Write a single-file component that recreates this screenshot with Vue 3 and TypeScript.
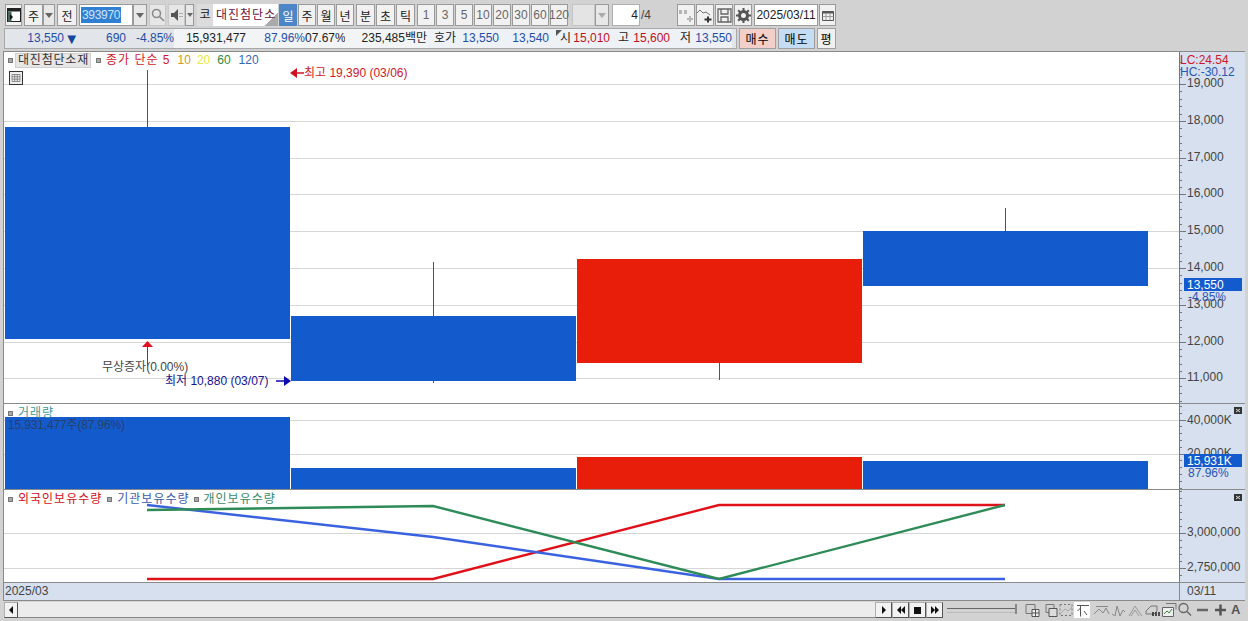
<template>
  <div class="page">
    <!-- 상단 툴바 -->
    <div class="bar bar--top">
      <button class="btn w17 icon">
        <svg width="14" height="14" viewBox="0 0 14 14"><rect x="0.5" y="0.5" width="13" height="13" fill="#fff" stroke="#222"/><rect x="1" y="1" width="12" height="2.5" fill="#222"/><rect x="1" y="3.5" width="3.5" height="10" fill="#4a6a5a"/><path d="M3 6l3 3-3 3z" fill="#111"/></svg>
      </button>
      <div class="combo">
        <button class="btn w19">주</button>
        <button class="btn arrow w12"><i class="caret"></i></button>
      </div>
      <button class="btn w20">전</button>
      <div class="combo">
        <div class="code"><span class="code__sel">393970</span></div>
        <button class="btn arrow w14"><i class="caret"></i></button>
      </div>
      <button class="btn w17 flat icon">
        <svg width="14" height="14" viewBox="0 0 14 14" fill="none" stroke="#8a8a8a" stroke-width="1.6"><circle cx="5.5" cy="5.5" r="4"/><path d="M8.5 8.5l4.5 4.5"/></svg>
      </button>
      <div class="combo">
        <button class="btn w17 flat icon">
          <svg width="14" height="14" viewBox="0 0 14 14"><path d="M1 5h3l4-4v12l-4-4H1z" fill="#555"/><path d="M10 5v1M10 8v1M12 5v1M12 8v1" stroke="#777"/></svg>
        </button>
        <button class="btn arrow w9"><i class="caret caret--sm"></i></button>
      </div>
      <div class="name ml3">
        <span class="name__tag">코</span>
        <span class="name__text">대진첨단소</span>
      </div>
      <div class="group ml1">
        <button v-for="p in periods" :key="p" class="btn w18" :class="{ 'btn--on': p === '일' }">{{ p }}</button>
      </div>
      <div class="group">
        <button v-for="p in units" :key="p" class="btn w19">{{ p }}</button>
      </div>
      <div class="group">
        <button v-for="n in minutes" :key="n" class="btn w18 btn--mute">{{ n }}</button>
      </div>
      <div class="combo ml2">
        <div class="blank"></div>
        <button class="btn arrow w14 btn--mute"><i class="caret caret--light"></i></button>
      </div>
      <div class="count ml3">4</div>
      <span class="count__total">/4</span>
      <div class="group tools">
        <button class="btn w18 icon">
          <svg width="16" height="16" viewBox="0 0 16 16" fill="#b5b5b5"><rect x="1" y="3" width="3" height="4"/><rect x="6" y="3" width="3" height="4"/><path d="M11 9h2v2h2v2h-2v2h-2v-2H9v-2h2z"/></svg>
        </button>
        <button class="btn w18 icon">
          <svg width="16" height="16" viewBox="0 0 16 16" fill="none"><path d="M0 6l3-3 3 3 3-1 4 3" stroke="#777"/><path d="M10 9.5h2v2h2.500v2H12v2h-2v-2H7.500v-2H10z" fill="#333"/></svg>
        </button>
        <button class="btn w18 icon">
          <svg width="15" height="15" viewBox="0 0 15 15" fill="none" stroke="#666" stroke-width="1.3"><path d="M1 1h13v13H1z"/><path d="M4 1v5h7V1M4 14V9h7v5"/></svg>
        </button>
        <button class="btn w18 icon">
          <svg width="15" height="15" viewBox="0 0 15 15"><circle cx="7.500" cy="7.500" r="4" fill="none" stroke="#555" stroke-width="3"/><path d="M7.500 0v3M7.500 12v3M0 7.500h3M12 7.500h3M2.200 2.200l2 2M10.800 10.800l2 2M12.800 2.200l-2 2M4.200 10.800l-2 2" stroke="#555" stroke-width="2"/></svg>
        </button>
      </div>
      <div class="date">2025/03/11</div>
      <button class="btn w17 icon ml1">
        <svg width="14" height="13" viewBox="0 0 14 13" fill="none" stroke="#555"><path d="M1.500 2.500h11v9h-11z"/><path d="M1.500 3.500h11" stroke-width="2"/><path d="M1.500 7.500h11M5 4v7M9 4v7" stroke="#999"/></svg>
      </button>
    </div>

    <!-- 시세 -->
    <div class="bar bar--quote">
      <div class="quote">
        <span v-for="c in quoteCells" :key="c.x" class="cell" :class="c.cls" :style="{ width: c.w + 'px' }">{{ c.t }}</span>
        <svg class="notch" width="6" height="6" viewBox="0 0 6 6"><path d="M0 0h6L0 6z" fill="#555"/></svg>
      </div>
      <button class="trade trade--buy">매수</button>
      <button class="trade trade--sell">매도</button>
      <button class="trade trade--eval">평</button>
    </div>

    <!-- 차트 -->
    <div class="chart">
      <div class="pane pane--price">
        <svg class="plot" width="1175" height="351" viewBox="4 52 1175 351">
          <line v-for="y in priceGrid" :key="y" x1="4" x2="1179" :y1="y + 0.5" :y2="y + 0.5" class="grid" />
          <g v-for="c in candles" :key="c.x">
            <rect :x="c.wx" :y="c.wt" width="1" :height="c.wb - c.wt" :fill="c.wick" />
            <rect :x="c.x" :y="c.top" width="285" :height="c.bottom - c.top" :fill="c.color" />
          </g>
          <path d="M147.500 366V344" stroke="#f00018" />
          <path d="M142 347l5.500-6 5.500 6z" fill="#e01020" />
          <text x="102" y="371" class="t t--dark">무상증자(0.00%)</text>
          <text x="165" y="385" class="t t--navy">최저 10,880 (03/07)</text>
          <path d="M276 381h8" stroke="#0a0ab0" stroke-width="1.500" />
          <path d="M284 376l7 5-7 5z" fill="#0a0ab0" />
          <path d="M297 73h7" stroke="#d01020" stroke-width="1.500" />
          <path d="M297 68l-7 5 7 5z" fill="#d01020" />
          <text x="304" y="77" class="t t--red">최고 19,390 (03/06)</text>
        </svg>
        <svg class="axis" width="66" height="351" viewBox="1179 52 66 351">
          <line x1="1179.500" x2="1179.500" y1="52" y2="403" class="tick" />
          <line v-for="y in priceMinor" :key="y" x1="1179" x2="1182" :y1="y + 0.5" :y2="y + 0.5" class="tick" />
          <g v-for="l in priceLabels" :key="l.t">
            <line x1="1179" x2="1186" :y1="l.y + 0.5" :y2="l.y + 0.5" class="tick" />
            <text x="1187" :y="l.y + 3" class="t t--axis">{{ l.t }}</text>
          </g>
          <text x="1180" y="64" class="t t--red">LC:24.54</text>
          <text x="1180" y="76" class="t t--blue">HC:-30.12</text>
          <rect x="1184" y="278" width="58" height="13" fill="#135bcd" />
          <text x="1187" y="289" class="t t--white">13,550</text>
          <text x="1188" y="301" class="t t--blue">-4.85%</text>
        </svg>
        <div class="legend">
          <i class="dot"></i>
          <span class="legend__name">대진첨단소재</span>
          <i class="dot"></i>
          <span class="c-red hangul">종가 단순 5</span>
          <span class="c-orange ml7">10</span>
          <span class="c-yellow ml6">20</span>
          <span class="c-green ml7">60</span>
          <span class="c-blue ml8">120</span>
        </div>
        <div class="table-btn">
          <svg width="14" height="14" viewBox="0 0 14 14" fill="#fff" stroke="#333"><rect x="0.500" y="0.500" width="13" height="13" fill="#eee"/><path d="M3 3.500h8v7H3zM3 5.800h8M3 8.200h8M5.700 3.500v7M8.300 3.500v7" stroke="#777" stroke-width="0.800" fill="none"/></svg>
        </div>
      </div>

      <div class="pane pane--vol">
        <svg class="plot" width="1175" height="85" viewBox="4 404 1175 85">
          <line x1="4" x2="1179" y1="420.500" y2="420.500" class="grid" />
          <line x1="4" x2="1179" y1="454.500" y2="454.500" class="grid" />
          <rect v-for="b in volumes" :key="b.x" :x="b.x" :y="b.y" width="285" :height="489 - b.y" :fill="b.color" />
          <text x="8" y="429" class="t t--over">15,931,477주(87.96%)</text>
        </svg>
        <svg class="axis" width="66" height="85" viewBox="1179 404 66 85">
          <line x1="1179.500" x2="1179.500" y1="404" y2="489" class="tick" />
          <line v-for="y in volMinor" :key="y" x1="1179" x2="1182" :y1="y + 0.5" :y2="y + 0.5" class="tick" />
          <line x1="1179" x2="1186" y1="420.500" y2="420.500" class="tick" />
          <line x1="1179" x2="1186" y1="454.500" y2="454.500" class="tick" />
          <text x="1187" y="424" class="t t--axis">40,000K</text>
          <text x="1187" y="457" class="t t--axis">20,000K</text>
          <rect x="1184" y="454" width="58" height="13" fill="#135bcd" />
          <text x="1187" y="465" class="t t--white">15,931K</text>
          <text x="1188" y="477" class="t t--blue">87.96%</text>
          <rect x="1234" y="407" width="8" height="7" fill="#333" />
          <path d="M1236 409l4 3M1240 409l-4 3" stroke="#ddd" />
        </svg>
        <div class="legend legend--sub">
          <i class="dot"></i>
          <span class="c-teal hangul">거래량</span>
        </div>
      </div>

      <div class="pane pane--hold">
        <svg class="plot" width="1175" height="92" viewBox="4 490 1175 92">
          <line x1="4" x2="1179" y1="533.500" y2="533.500" class="grid" />
          <line x1="4" x2="1179" y1="568.500" y2="568.500" class="grid" />
          <polyline v-for="l in holdLines" :key="l.color" :points="l.points" fill="none" :stroke="l.color" stroke-width="2.400" />
        </svg>
        <svg class="axis" width="66" height="92" viewBox="1179 490 66 92">
          <line x1="1179.500" x2="1179.500" y1="490" y2="582" class="tick" />
          <line v-for="y in holdMinor" :key="y" x1="1179" x2="1182" :y1="y + 0.5" :y2="y + 0.5" class="tick" />
          <line x1="1179" x2="1186" y1="533.500" y2="533.500" class="tick" />
          <line x1="1179" x2="1186" y1="568.500" y2="568.500" class="tick" />
          <text x="1187" y="536" class="t t--axis">3,000,000</text>
          <text x="1187" y="571" class="t t--axis">2,750,000</text>
          <rect x="1234" y="494" width="8" height="7" fill="#333" />
          <path d="M1236 496l4 3M1240 496l-4 3" stroke="#ddd" />
        </svg>
        <div class="legend legend--sub">
          <i class="dot"></i>
          <span class="c-red2 hangul">외국인보유수량</span>
          <i class="dot ml5"></i>
          <span class="c-blue2 hangul">기관보유수량</span>
          <i class="dot ml4"></i>
          <span class="c-green2 hangul">개인보유수량</span>
        </div>
      </div>

      <div class="dates">
        <span class="dates__from">2025/03</span>
        <span class="dates__to">03/11</span>
      </div>
    </div>

    <!-- 하단 스크롤/도구 -->
    <div class="foot">
      <button class="fbtn w14"><i class="tri tri--l"></i></button>
      <div class="track"></div>
      <button class="fbtn w17"><i class="tri tri--r"></i></button>
      <button class="fbtn w17"><i class="tri tri--l"></i><i class="tri tri--l"></i></button>
      <button class="fbtn w17"><i class="square"></i></button>
      <button class="fbtn w17"><i class="tri tri--r"></i><i class="tri tri--r"></i></button>
      <div class="slider"><i class="slider__knob"></i></div>
      <div class="tools2">
        <svg width="219" height="16" viewBox="0 0 219 16" fill="none" stroke="#777">
          <path d="M1 2.500h9v9H1z" /><path d="M7 7.500h7v7H7z" fill="#eee" stroke="#555" /><path d="M10.500 7.500v7M7 11h7" stroke="#555" />
          <path d="M21 2.500h8v8h-8z" /><path d="M24 6.500h8v8h-8z" fill="#ddd" stroke="#555" />
          <path d="M35 2.500h12v11H35z" stroke-dasharray="2 2" /><path d="M36 11l4-4 3 2 4-4" stroke="#aaa" />
          <rect x="49" y="0" width="16" height="16" fill="#fff" stroke="none" /><path d="M52 3.500h12M55.500 3.500v11M59 9l3 4M55.500 6l-3 3" stroke="#555" />
          <path d="M69 12l5-5 4 4 3-5 3 6M71 4.500h12" stroke="#888" />
          <path d="M87 12l3 2 2-10 3 10 3-6 2 2" stroke="#888" />
          <path d="M104 14l6-10 4 6 3 4M106 14l4-6 4 6" stroke="#999" />
          <path d="M121 9l5-5h6v5l-3 3h-8z" stroke="#777" /><path d="M128 14v-4M131 14v-4M134 14v-4" stroke="#222" stroke-width="1.500" />
          <path d="M141 1.500h10v6" stroke="#777" /><path d="M137.500 5.500h11v9h-11z" fill="#eee" stroke="#666" /><path d="M139 12l3-3 2 2 3-4" stroke="#3a8a3a" />
          <circle cx="158.500" cy="6" r="4.500" stroke="#666" stroke-width="1.300" /><path d="M162 9.500l4 4" stroke="#666" stroke-width="1.500" />
          <path d="M172 8h11" stroke="#666" stroke-width="2.500" />
          <path d="M190 8h11M195.500 2.500v11" stroke="#555" stroke-width="2.500" />
        </svg>
        <span class="tools2__a">A</span>
      </div>
    </div>
  </div>
</template>

<script setup lang="ts">
const periods = ['일', '주', '월', '년']
const units = ['분', '초', '틱']
const minutes = [1, 3, 5, 10, 20, 30, 60, 120]

interface QuoteCell {
  x: number
  w: number
  t: string
  cls: string
}

// 시세줄 셀: 오른쪽 정렬 + 고정폭
const quoteCells: QuoteCell[] = [
  { x: 1, w: 59, t: '13,550', cls: 'c-blue3' },
  { x: 2, w: 15, t: '▼', cls: 'c-blue3 down' },
  { x: 3, w: 47, t: '690', cls: 'c-blue3' },
  { x: 4, w: 48, t: '-4.85%', cls: 'c-blue3' },
  { x: 5, w: 72, t: '15,931,477', cls: 'lite' },
  { x: 6, w: 59, t: '87.96%', cls: 'lite c-blue3' },
  { x: 7, w: 40, t: '07.67%', cls: 'lite' },
  { x: 8, w: 82, t: '235,485백만', cls: 'lite2' },
  { x: 9, w: 29, t: '호가', cls: 'pale' },
  { x: 10, w: 43, t: '13,550', cls: 'pale c-blue3' },
  { x: 11, w: 50, t: '13,540', cls: 'pale c-blue3' },
  { x: 12, w: 22, t: '시', cls: 'pale' },
  { x: 13, w: 39, t: '15,010', cls: 'pale c-red3' },
  { x: 14, w: 19, t: '고', cls: 'pale' },
  { x: 15, w: 41, t: '15,600', cls: 'pale c-red3' },
  { x: 16, w: 21, t: '저', cls: 'pale' },
  { x: 17, w: 41, t: '13,550', cls: 'pale c-blue3' }
]

const BLUE = '#135bcd'
const RED = '#e81d0a'

const priceY = (p: number) => Math.round(84 + ((19000 - p) / 1000) * 36.8)
const priceLabels = [19000, 18000, 17000, 16000, 15000, 14000, 13000, 12000, 11000].map((p) => ({
  t: p.toLocaleString('en-US'),
  y: priceY(p)
}))
const priceGrid = priceLabels.map((l) => l.y)

const range = (from: number, to: number, step: number) => {
  const out: number[] = []
  for (let v = from; v < to; v += step) out.push(Math.round(v))
  return out
}
const priceMinor = range(62, 403, 7.36)
const volMinor = range(406, 489, 6.8)
const holdMinor = range(491, 582, 7)

const candles = [
  { x: 5, top: 127, bottom: 339, wx: 147, wt: 70, wb: 127, color: BLUE, wick: '#1060c0' },
  { x: 291, top: 316, bottom: 381, wx: 433, wt: 262, wb: 383, color: BLUE, wick: '#1060c0' },
  { x: 577, top: 259, bottom: 363, wx: 719, wt: 259, wb: 380, color: RED, wick: '#ff1000' },
  { x: 863, top: 231, bottom: 286, wx: 1005, wt: 208, wb: 231, color: BLUE, wick: '#1060c0' }
]

const volumes = [
  { x: 5, y: 417, color: BLUE },
  { x: 291, y: 468, color: BLUE },
  { x: 577, y: 457, color: RED },
  { x: 863, y: 461, color: BLUE }
]

const holdLines = [
  { color: '#e0101a', points: '147,579 433,579 719,505 1005,505' },
  { color: '#3a62e0', points: '147,505 433,537 719,579 1005,579' },
  { color: '#2e8b57', points: '147,510 433,506 719,579 1005,505' }
]
</script>

<style>
html,
body {
  margin: 0;
  background: #d2d2d2;
}
</style>

<style scoped>
.page {
  width: 1248px;
  height: 621px;
  overflow: hidden;
  background: #d2d2d2;
  font-family: "Liberation Sans", "Noto Sans CJK KR", sans-serif;
  font-size: 12px;
  color: #222;
  box-sizing: border-box;
  padding-top: 4px;
}

button {
  font: inherit;
  padding: 0;
}

.bar {
  display: flex;
  align-items: stretch;
  margin-left: 5px;
}

.bar--top {
  height: 22px;
  gap: 2px;
}

.btn {
  height: 22px;
  box-sizing: border-box;
  border: 1px solid #9a9a9a;
  background: #f1f1f1;
  color: #222;
  display: flex;
  align-items: center;
  justify-content: center;
  flex-shrink: 0;
}

.btn--on {
  background: #4d86c6;
  border-color: #4d86c6;
  color: #fff;
}

.btn--mute {
  color: #666;
}

.flat {
  border-color: #c8c8c8;
  background: #e6e6e6;
}

.arrow {
  background: #e8e8e8;
}

.icon svg {
  display: block;
}

.w9 { width: 9px; }
.w12 { width: 12px; }
.w14 { width: 14px; }
.w17 { width: 17px; }
.w18 { width: 18px; }
.w19 { width: 19px; }
.w20 { width: 20px; }

.ml1 { margin-left: -1px; }
.ml2 { margin-left: 2px; }
.ml3 { margin-left: 1px; }
.ml4 { margin-left: 4px; }
.ml5 { margin-left: 5px; }
.ml6 { margin-left: 6px; }
.ml7 { margin-left: 7px; }
.ml8 { margin-left: 8px; }

.combo,
.group {
  display: flex;
}

.group {
  gap: 1px;
}

.caret {
  width: 0;
  height: 0;
  border-left: 4px solid transparent;
  border-right: 4px solid transparent;
  border-top: 5px solid #666;
}

.caret--sm {
  border-left-width: 3px;
  border-right-width: 3px;
  border-top-width: 4px;
}

.caret--light {
  border-top-color: #aaa;
}

.code {
  width: 54px;
  height: 22px;
  box-sizing: border-box;
  background: #fff;
  border: 1px solid #9a9a9a;
  padding: 2px 0 0 1px;
  line-height: 16px;
}

.code__sel {
  display: inline-block;
  background: #2f7fd3;
  color: #cfe4fa;
  padding: 0 1px;
  letter-spacing: -0.300px;
}

.name {
  display: flex;
  width: 81px;
  height: 22px;
  box-sizing: border-box;
  align-items: center;
}

.name__tag {
  width: 16px;
  height: 22px;
  line-height: 22px;
  text-align: center;
  background: #dcdcdc;
}

.name__text {
  width: 65px;
  height: 22px;
  line-height: 22px;
  background: linear-gradient(135deg, #fff 85%, #aaa 85%);
  color: #6a1040;
  padding-left: 3px;
  box-sizing: border-box;
  white-space: nowrap;
  overflow: hidden;
  letter-spacing: 1px;
}

.blank {
  width: 23px;
  height: 22px;
  box-sizing: border-box;
  background: #e4e4e4;
  border: 1px solid #c4c4c4;
}

.count {
  width: 28px;
  height: 22px;
  box-sizing: border-box;
  background: #fff;
  border: 1px solid #b0b0b0;
  text-align: right;
  line-height: 20px;
  padding-right: 1px;
}

.count__total {
  width: 11px;
  line-height: 22px;
  margin-left: -1px;
  color: #444;
}

.tools {
  margin-left: 23px;
  gap: 1px;
}

.date {
  width: 64px;
  height: 22px;
  box-sizing: border-box;
  background: #fff;
  border: 1px solid #9a9a9a;
  line-height: 20px;
  text-align: center;
}

.bar--quote {
  margin-left: 4px;
  margin-top: 2px;
  height: 21px;
  gap: 2px;
}

.quote {
  position: relative;
  display: flex;
  width: 733px;
  box-sizing: border-box;
  background: #e2e6ea;
  border: 1px solid #a8a8a8;
  line-height: 19px;
}

.notch {
  position: absolute;
  left: 551px;
  top: 1px;
}

.cell {
  box-sizing: border-box;
  text-align: right;
  white-space: nowrap;
  flex-shrink: 0;
}

.lite {
  background: #f2f4f6;
}

.lite2 {
  background: #f2f4f6;
}

.pale {
  background: #eef2f7;
}

.c-blue3 { color: #1f4fa8; }
.c-red3 { color: #c01020; }

.down {
  font-size: 15px;
  color: #12489c;
}

.trade {
  border: 1px solid #a0a0a0;
  width: 37px;
  letter-spacing: 1px;
}

.trade--buy {
  background: #f3cfc9;
}

.trade--sell {
  background: #c4dcf4;
}

.trade--eval {
  width: 19px;
  background: #f0f0f0;
}

.chart {
  margin: 2px 3px 0 3px;
  border-top: 1px solid #8a8a8a;
  border-left: 1px solid #8a8a8a;
  background: #fff;
  width: 1241px;
}

.pane {
  position: relative;
  display: flex;
  border-bottom: 1px solid #8a8a8a;
}

.plot,
.axis {
  display: block;
  flex-shrink: 0;
}

.plot {
  background: #fff;
}

.axis {
  background: #d6e0ee;
}

.grid {
  stroke: #d6d6d6;
}

.tick {
  stroke: #777;
}

.t {
  font-family: "Liberation Sans", "Noto Sans CJK KR", sans-serif;
  font-size: 12px;
}

.t--dark { fill: #444; }
.t--navy { fill: #14148c; }
.t--red { fill: #d01828; }
.t--blue { fill: #2a55b8; }
.t--white { fill: #fff; }
.t--axis { fill: #444; }
.t--over { fill: #28406a; letter-spacing: -0.150px; }

.legend {
  position: absolute;
  left: 4px;
  top: 1px;
  display: flex;
  align-items: center;
  height: 15px;
  line-height: 15px;
  white-space: nowrap;
}

.legend--sub {
  top: 1px;
  height: 16px;
}

.hangul {
  letter-spacing: 1px;
}

.dot {
  width: 5px;
  height: 5px;
  margin-right: 5px;
  background: #a8a8a8;
  border: 1px solid #777;
  box-sizing: border-box;
}

.legend__name {
  width: 76px;
  margin: 0 5px 0 -3px;
  height: 15px;
  box-sizing: border-box;
  padding-left: 2px;
  background: #e6e6e6;
  border: 1px solid #d0d0d0;
  line-height: 13px;
  color: #333;
  letter-spacing: 0.800px;
}

.c-red { color: #d01828; }
.c-orange { color: #d69a20; }
.c-yellow { color: #e8e840; }
.c-green { color: #2a8a3a; }
.c-blue { color: #3468b0; }
.c-teal { color: #3c9a9a; }
.c-red2 { color: #d01020; }
.c-blue2 { color: #3a5aa8; }
.c-green2 { color: #3a8a6a; }

.table-btn {
  position: absolute;
  left: 5px;
  top: 19px;
  line-height: 0;
}

.dates {
  display: flex;
  height: 18px;
  line-height: 16px;
  background: #d6e0ee;
  border-bottom: 1px solid #8a8a8a;
  box-sizing: border-box;
  color: #444;
}

.dates__from {
  width: 1175px;
  padding-left: 1px;
  box-sizing: border-box;
}

.dates__to {
  padding-left: 7px;
  border-left: 1px solid #8a8a8a;
}

.foot {
  display: flex;
  align-items: center;
  height: 16px;
  margin: 1px 0 0 4px;
}

.fbtn {
  height: 16px;
  box-sizing: border-box;
  display: flex;
  align-items: center;
  justify-content: center;
  background: #f2f2f2;
  border: 1px solid #b0b0b0;
  border-right-color: #555;
  border-bottom-color: #555;
  flex-shrink: 0;
}

.track {
  width: 857px;
  height: 15px;
  background: #ececec;
  border-bottom: 1px solid #888;
}

.tri {
  width: 0;
  height: 0;
  border-top: 4px solid transparent;
  border-bottom: 4px solid transparent;
}

.tri--l {
  border-right: 4px solid #111;
}

.tri--r {
  border-left: 4px solid #111;
}

.square {
  width: 7px;
  height: 7px;
  background: #111;
}

.slider {
  position: relative;
  width: 70px;
  height: 3px;
  margin: 0 4px;
  flex-shrink: 0;
  border-top: 1px solid #666;
  border-bottom: 1px solid #bbb;
}

.slider__knob {
  position: absolute;
  right: 0;
  top: -5px;
  width: 2px;
  height: 10px;
  background: #888;
}

.tools2 {
  display: flex;
  align-items: center;
  margin-left: 4px;
  line-height: 16px;
}

.tools2 svg {
  display: block;
  flex-shrink: 0;
}

.tools2__a {
  margin-left: -13px;
  font-weight: 700;
  font-size: 13px;
  color: #555;
}
</style>
